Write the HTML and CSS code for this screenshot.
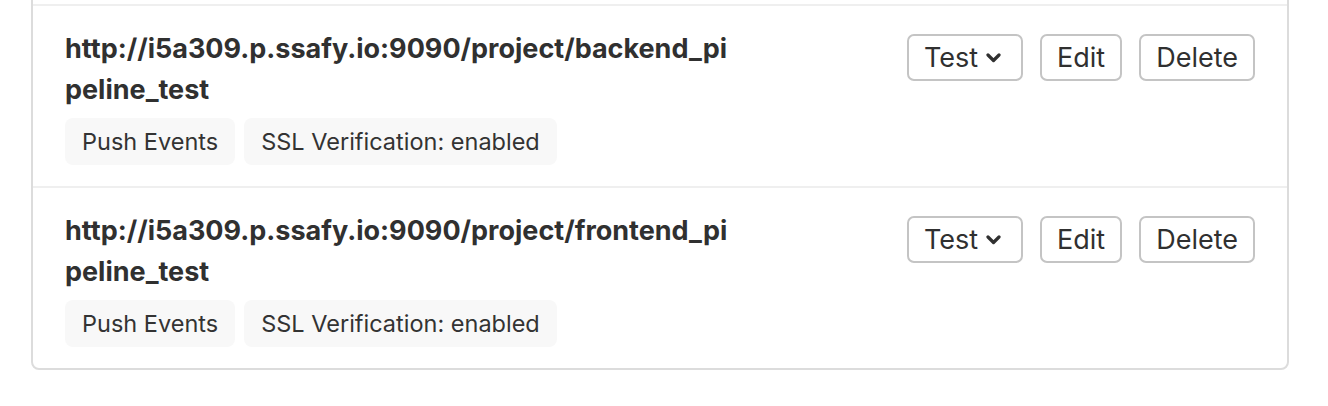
FILE: index.html
```html
<!DOCTYPE html>
<html lang="en">
<head>
<meta charset="utf-8">
<title>Webhooks</title>
<link rel="stylesheet" href="styles.css">
</head>
<body>
<div class="card">
  <ul class="hook-list">
    <li class="hook">
      <div class="hook-info">
        <div class="hook-url">http://i5a309.p.ssafy.io:9090/project/backend_pipeline_test</div>
        <div class="badges">
          <span class="badge">Push Events</span>
          <span class="badge">SSL Verification: enabled</span>
        </div>
      </div>
      <div class="actions">
        <button class="btn btn-dropdown">Test <svg class="chev" viewBox="0 0 15 10" width="15" height="10"><path d="M2 2 L7.5 7.5 L13 2" fill="none" stroke="currentColor" stroke-width="3.2" stroke-linecap="round" stroke-linejoin="round"/></svg></button>
        <button class="btn">Edit</button>
        <button class="btn">Delete</button>
      </div>
    </li>
    <li class="hook">
      <div class="hook-info">
        <div class="hook-url">http://i5a309.p.ssafy.io:9090/project/frontend_pipeline_test</div>
        <div class="badges">
          <span class="badge">Push Events</span>
          <span class="badge">SSL Verification: enabled</span>
        </div>
      </div>
      <div class="actions">
        <button class="btn btn-dropdown">Test <svg class="chev" viewBox="0 0 15 10" width="15" height="10"><path d="M2 2 L7.5 7.5 L13 2" fill="none" stroke="currentColor" stroke-width="3.2" stroke-linecap="round" stroke-linejoin="round"/></svg></button>
        <button class="btn">Edit</button>
        <button class="btn">Delete</button>
      </div>
    </li>
  </ul>
</div>
</body>
</html>
```
FILE: styles.css
```css
html, body {
  margin: 0;
  padding: 0;
  background: #ffffff;
}
body {
  font-family: Inter, "Noto Sans", "Liberation Sans", sans-serif;
  color: #303030;
}
.card {
  margin: -20px 0 0 31px;
  width: 1254px;
  border: 2px solid #dcdcdc;
  border-radius: 0 0 8px 8px;
  padding-top: 22px;
}
.hook-list {
  list-style: none;
  margin: 0;
  padding: 0;
}
.hook {
  display: flex;
  justify-content: space-between;
  align-items: flex-start;
  border-top: 2px solid #efefef;
  padding: 22px 32px 21px 32px;
}
.hook-info {
  width: 676px;
}
.hook-url {
  font-size: 27px;
  line-height: 41px;
  font-weight: 700;
  word-break: break-all;
  color: #303030;
}
.badges {
  display: flex;
  gap: 9px;
  margin-top: 8px;
}
.badge {
  display: inline-flex;
  align-items: center;
  height: 47px;
  padding: 0 17px;
  box-sizing: border-box;
  background: #f8f8f8;
  border-radius: 8px;
  font-size: 23.5px;
  color: #333333;
}
.actions {
  display: flex;
  gap: 17px;
  margin-top: 6px;
}
.btn {
  display: inline-flex;
  align-items: center;
  height: 47px;
  padding: 0 15px;
  box-sizing: border-box;
  background: #ffffff;
  border: 2px solid #c4c4c4;
  border-radius: 7px;
  font-family: Inter, "Noto Sans", "Liberation Sans", sans-serif;
  font-size: 27px;
  color: #303030;
}
.btn-dropdown {
  gap: 8px;
  padding-right: 20px;
}
.chev {
  display: block;
  margin-top: 1px;
}
```
